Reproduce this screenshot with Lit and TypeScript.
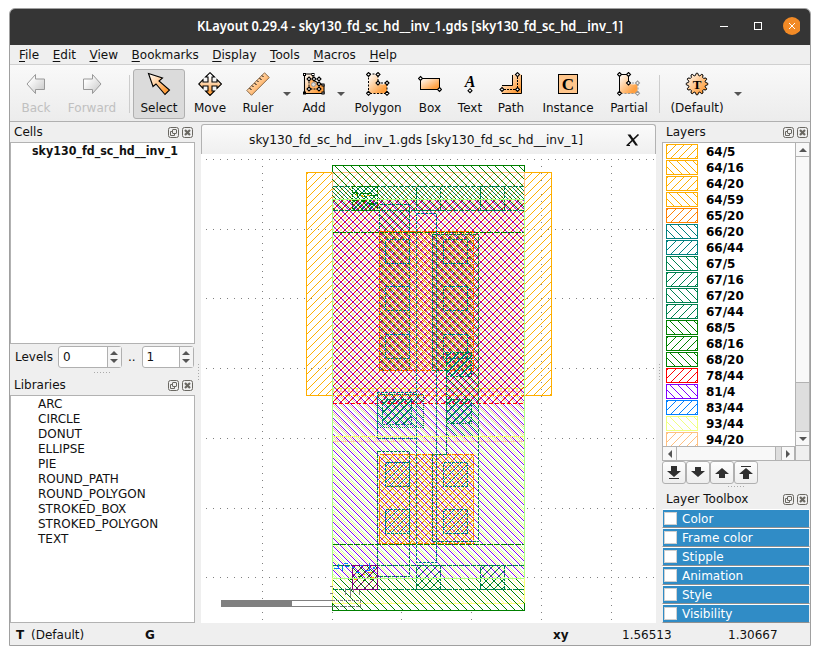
import { LitElement, html, svg, css, nothing } from "lit";
import { customElement, property } from "lit/decorators.js";

const diamond = (x: number, y: number, c = "#000") =>
  svg`<path d=${`M${x} ${y - 2}L${x + 2} ${y}L${x} ${y + 2}L${x - 2} ${y}Z`} fill="#fff" stroke=${c} stroke-width="1.1"></path>`;

const icons: Record<string, unknown> = {
  back: svg`<path d="M3 12L11.500 2.500V7H20.500V17.500H11.500V21.500Z" fill="url(#gray)" stroke="#999"/>`,
  forward: svg`<path d="M21 12L12.500 2.500V7H3.500V17.500H12.500V21.500Z" fill="url(#gray)" stroke="#999"/>`,
  select: svg`<path d="M1.500 1.500L15.500 6L12 9L22.500 18L18 22.500L9 12L6 14.500Z" fill="url(#or)" stroke="#000" stroke-width="1.100"/>`,
  move: svg`<path d="M12 .7L16.500 5H14V10H19V7.500L23.500 12L19 16.500V14H14V19H16.500L12 23.500L7.500 19H10V14H5V16.500L.7 12L5 7.500V10H10V5H7.500Z" fill="url(#ov)" stroke="#000" stroke-width="1.100"/>`,
  ruler: svg`<path d="M.8 18.500L18.500 .8L23.300 5.500L5.500 23.300Z" fill="url(#or)" stroke="#8a6a48" stroke-width="1"/><path d="M3.500 16l2 2M6 13.500l1.500 1.500M8.500 11l2 2M11 8.500l1.500 1.500M13.500 6l2 2M16 3.500l1.500 1.500" stroke="#000"/>`,
  add: svg`<path d="M2.500 2H11V8L18 12L22 13V21.500H2.500Z" fill="url(#or)" stroke="#000" stroke-width="1.100"/><path d="M7 6.500V17H17" fill="none" stroke="#000" stroke-dasharray="2 1"/><path d="M8 7.500V16H16V11.500H12V7.500Z" fill="#ffb060"/><circle cx="11.500" cy="12.500" r="2" fill="#ddd" stroke="#999"/>
    ${[[2.500, 2.500], [11, 2.500], [2.500, 21], [21, 13], [21, 21]].map(([x, y]) => svg`<rect x=${x - 1} y=${y - 1} width="2" height="2" fill="#fff" stroke="#000"/>`)}
    ${diamond(7, 7)}${diamond(12, 7)}${diamond(17, 7)}${diamond(7, 17)}${diamond(17, 17)}${diamond(17, 12)}`,
  polygon: svg`<path d="M2.500 2.500H12V11Q17 14 21 11V21.500H2.500Z" fill="url(#or)"/><path d="M2.500 2V21.500H21V11H12V2Z" fill="none" stroke="#000" stroke-dasharray="2 1.500"/>
    ${diamond(2.5, 2.5)}${diamond(12, 2.5)}${diamond(12, 11)}${diamond(21, 11)}${diamond(21, 21.3)}${diamond(2.5, 21.3)}`,
  box: svg`<rect x="2.500" y="6.500" width="19" height="11" fill="url(#or)" stroke="#000"/>${diamond(2.5, 6.5)}${diamond(21.5, 17.5)}`,
  text: svg`<text x="12" y="14.500" text-anchor="middle" font-family="Liberation Serif, serif" font-weight="700" font-style="italic" font-size="16">A</text>${diamond(12, 18.7)}`,
  path: svg`<path d="M13.500 2.500H22.500V21.500H2.500V13.500H13.500Z" fill="url(#or)"/><path d="M13.500 3V13.500H3M22.500 3V21.500H3" fill="none" stroke="#000"/><path d="M18.500 2V17.500H3" fill="none" stroke="#000" stroke-dasharray="2 1"/>${diamond(18.5, 2.6)}${diamond(18.5, 17.5)}${diamond(3, 17.5)}`,
  instance: svg`<rect x="2.500" y="2.500" width="19" height="19" fill="#ffc68c" stroke="#000"/><text x="12" y="17.500" text-anchor="middle" font-family="Liberation Serif, serif" font-weight="700" font-size="17">C</text>`,
  partial: svg`<path d="M2.500 2.500H11.500V11Q17 14 20.500 11V21.500H2.500Z" fill="url(#or)"/><path d="M2.500 21.500V2.500H11.500V11" fill="none" stroke="#000"/><path d="M11.500 11H21V21.500H2.500" fill="none" stroke="#999" stroke-dasharray="2 1.500"/>
    ${diamond(2.5, 2.5)}${diamond(11.5, 2.5)}${diamond(11.5, 11)}${diamond(20.5, 11, "#999")}${diamond(20.5, 21.3, "#999")}${diamond(2.5, 21.3)}`,
  gear: svg`<path d=${Array.from({ length: 48 }, (_, i) => {
    const r = i % 4 < 2 ? 10.8 : 8.6;
    const a = ((i - 0.5) * Math.PI) / 24;
    return `${i ? "L" : "M"}${(12 + r * Math.sin(a)).toFixed(2)} ${(12 - r * Math.cos(a)).toFixed(2)}`;
  }).join("") + "Z"} fill="url(#or)" stroke="#000"/><text x="12" y="16.500" text-anchor="middle" font-family="Liberation Serif, serif" font-weight="700" font-size="13">T</text>`,
};

@customElement("tool-button")
class ToolButton extends LitElement {
  @property() icon = "";
  @property() label = "";
  static styles = css`
    :host { display: flex; flex-direction: column; align-items: center; box-sizing: border-box; height: 50px; padding-top: 3px; flex: none; }
    :host([active]) { background: #dbdbdb; border: 1px solid #b0b0b0; border-radius: 3px; padding-top: 2px; }
    :host([disabled]) { color: #c0c0c0; }
    svg { width: 24px; height: 24px; flex: none; }
    span { line-height: 14px; margin-top: 5px; white-space: nowrap; }
  `;
  render() {
    return html`<svg viewBox="0 0 24 24">
        <defs>
          <linearGradient id="or" x2="1" y2="1"><stop offset=".1" stop-color="#fff4e8"/><stop offset=".8" stop-color="#ffa040"/></linearGradient>
          <linearGradient id="ov" x2="0" y2="1"><stop offset=".2" stop-color="#fff"/><stop offset=".8" stop-color="#ffa040"/></linearGradient>
          <linearGradient id="gray" x2="1" y2="1"><stop offset=".2" stop-color="#fff"/><stop offset="1" stop-color="#c4c4c4"/></linearGradient>
        </defs>${icons[this.icon]}</svg><span>${this.label}</span>`;
  }
}

@customElement("dock-title")
class DockTitle extends LitElement {
  @property() label = "";
  static styles = css`
    :host { display: flex; align-items: center; height: 20px; padding: 0 2px 0 4px; box-sizing: border-box; gap: 3px; }
    span { flex: 1; }
    svg { width: 11px; height: 11px; }
  `;
  render() {
    return html`<span>${this.label}</span>
      <svg viewBox="0 0 11 11" fill="none" stroke="#6a6862"><rect x=".5" y=".5" width="10" height="10" rx="2"/><rect x="4.500" y="2.500" width="4" height="4" rx=".5"/><path d="M4 4.500H2.500V8.500H6.500V7"/></svg>
      <svg viewBox="0 0 11 11" fill="none" stroke="#6a6862"><rect x=".5" y=".5" width="10" height="10" rx="2"/><path d="M3 3l5 5M8 3l-5 5" stroke-width="2.200"/></svg>`;
  }
}

const up = html`<svg class="tri" viewBox="0 0 8 4"><path d="M0 4L4 0L8 4Z" fill="#555"/></svg>`;
const down = html`<svg class="tri" viewBox="0 0 8 4"><path d="M0 0L4 4L8 0Z" fill="#555"/></svg>`;

/** 8x8 one-pixel diagonal stipple; dir 1 leans "/", -1 leans "\". */
const stipple = (id: string, color: string, dir: number, phase: number) =>
  svg`<pattern id="${id}" width="8" height="8" patternUnits="userSpaceOnUse"><path fill="${color}" d="${Array.from(
    { length: 8 },
    (_, i) => `M${(((dir > 0 ? 7 - i : i) + phase) % 8 + 8) % 8} ${i}h1v1h-1z`
  ).join("")}"></path></pattern>`;

const layers: [string, string][] = [
  ["64/5", "#ffae00"], ["64/16", "#ffae00"], ["64/20", "#ffae00"], ["64/59", "#ffae00"], ["65/20", "#ff8000"],
  ["66/20", "#008080"], ["66/44", "#008080"], ["67/5", "#008050"], ["67/16", "#008050"], ["67/20", "#008050"],
  ["67/44", "#008050"], ["68/5", "#008000"], ["68/16", "#008000"], ["68/20", "#008000"], ["78/44", "#ff0000"],
  ["81/4", "#8000ff"], ["83/44", "#0080ff"], ["93/44", "#f0ff80"], ["94/20", "#ffc080"],
];

@customElement("layout-canvas")
class LayoutCanvas extends LitElement {
  static styles = css`
    :host { display: block; background: #fff; overflow: hidden; }
    svg { display: block; width: 455px; height: 469px; }
  `;
  private shape(x1: number, y1: number, x2: number, y2: number, stroke: string, fills: string[], dash = "") {
    return svg`${fills.map((f) => svg`<rect x="${x1}" y="${y1}" width="${x2 - x1}" height="${y2 - y1}" fill="${`url(#${f})`}"></rect>`)}
      ${stroke ? svg`<rect x="${x1 + 0.5}" y="${y1 + 0.5}" width="${x2 - x1}" height="${y2 - y1}" fill="none" stroke="${stroke}" stroke-dasharray="${dash || nothing}"></rect>` : nothing}`;
  }
  private dots() {
    let d = "";
    const px = (x: number, y: number) => { d += `M${Math.floor(x)} ${Math.floor(y)}h1v1h-1z`; };
    for (let i = -18; i <= 46; i++)
      for (let j = 0; j <= 66; j++)
        if (i % 10 === 0 || j % 10 === 0) px(332 + i * 6.98, 159.4 + j * 6.975);
    return d;
  }
  render() {
    const s = this.shape.bind(this);
    const li = "#008050", poly = "#008080", dd = "3 1";
    return html`<svg viewBox="201 154 455 469" shape-rendering="crispEdges">
      <defs>
        ${stipple("well", "#ffae00", 1, 1)}${stipple("met", "#008000", -1, 1)}${stipple("peach", "#ffc080", 1, 3)}
        ${stipple("li", "#008050", -1, 5)}${stipple("con", "#008050", 1, 3)}${stipple("red", "#ff0000", 1, 7)}
        ${stipple("vio", "#8000ff", -1, 3)}${stipple("lime", "#c8ffa0", -1, 7)}${stipple("yel", "#ffff90", -1, 5)}
        ${stipple("sal", "#ffb8a0", -1, 1)}${stipple("or1", "#ff8000", 1, 1)}${stipple("or2", "#ff8000", -1, 0)}
        ${stipple("lic", "#008080", 1, 4)}${stipple("pur", "#800080", 1, 1)}
      </defs>
      <path fill="#808080" d="${this.dots()}"></path>
      ${s(306, 172, 551, 395, "#ffae00", ["well"])}
      <rect x="333" y="166" width="191" height="444" fill="#fff"/>
      ${s(332, 199, 524, 578, "", ["lime"])}
      ${s(332, 436, 524, 603, "#ffff80", ["yel"])}
      ${s(332, 172, 524, 391, "#ffc080", ["peach"])}
      ${s(332, 391, 524, 441, "#ffc8a8", ["sal"])}
      ${s(332, 388, 524, 436, "#f0ff60", [])}
      ${s(332, 165, 524, 199, "", ["met"])}
      ${s(332, 578, 524, 610, "", ["met"])}
      <path d="M332.500 172V165.500H524.500V172M332.500 603V610.500H524.500V603" fill="none" stroke="#008000"/>
      ${s(332, 199, 524, 578, "", ["vio"])}
      ${s(332, 199, 524, 403, "", ["red"])}
      <path d="M333 403.500H524" stroke="#f00" stroke-dasharray="4 2"/>
      <path d="M333 395.500H524" stroke="#ffae00" stroke-dasharray="2 2"/>
      <path d="M333 232.500H524M333 544.500H524" stroke="#008000" stroke-dasharray="6 1"/>
      ${s(332, 186, 524, 210, "", ["li"])}
      <path d="M333 186.500H524M333 210.500H524M333 565.500H524M333 589.500H524" stroke="#008050" stroke-dasharray="5 1"/>
      ${s(379, 204, 409, 370, li, ["li"], dd)}
      ${s(432, 234, 478, 370, "", ["li"])}
      ${s(379, 231, 473, 370, "#ff6000", ["or1", "or2"], "5 1")}
      ${s(379, 454, 473, 543, "#ff8000", ["or1", "or2"], "5 1")}
      ${s(446, 370, 478, 436, "", ["li"])}
      <path d="M432.500 234.500H478.500V541.500H432.500V454.500H446.500V370.500H432.500Z" fill="none" stroke="#008050" stroke-dasharray="3 1"/>
      ${s(377, 451, 409, 576, li, [], dd)}
      ${s(377, 394, 423, 427, li, ["li"], "1 1")}
      <path d="M416.500 438.500H377.500V392.500H416.500M416.500 213.500H436.500V562.500H416.500Z" fill="none" stroke="#008080" stroke-dasharray="3 1"/>
      ${[385, 443].flatMap((x) => [239, 286, 334].map((y) => s(x, y, x + 24, y + 24, poly, [], dd)))}
      ${[385, 443].flatMap((x) => [462, 509].map((y) => s(x, y, x + 24, y + 24, poly, ["lic"], dd)))}
      ${s(382, 399, 411, 424, poly, ["lic", "con", "li"], "2 1")}
      ${s(446, 352, 471, 376, li, ["con", "lic"], "2 1")}
      ${s(446, 399, 471, 423, li, ["con", "lic"], "2 1")}
      ${[416, 480].map((x) => s(x, 186, x + 24, 210, li, [], dd))}
      ${[416, 480].map((x) => s(x, 565, x + 24, 589, li, ["con"], dd))}
      ${s(352, 186, 377, 210, "#008000", ["con", "met"], dd)}
      <path d="M353 192h5v1h-5zM356 193h2v3h-2zM360 193h12v1h-12zM362 196h4v1h-4zM368 195h8v1h-8zM352 200h6v1h-6zM362 200h3v2h-3zM369 203h5v2h-5z" fill="#008000"/>
      <path d="M356 194h1v2h-1zM361 195h2v1h-2zM367 195h3v1h-3zM362 196h2v1h-2z" fill="#ffae00"/>
      ${s(352, 565, 377, 589, "#800080", ["met", "pur"])}
      <path d="M334 568h5v1h-5zM338 564h1v5h-1zM342 566h1v5h-1zM344 563h4v1h-4zM346 566h3v1h-3zM352 567h2v1h-2zM356 572h4v1h-4zM360 565h3v1h-3zM366 570h4v1h-4zM369 563h1v7h-1zM373 567h2v2h-2z" fill="#0080ff"/>
      <path d="M354 579h3v1h-3zM363 574h2v1h-2zM368 572h4v1h-4zM371 577h3v2h-3z" fill="#ffae00"/>
      <path d="M350 579h2v1h-2zM358 576h3v1h-3zM363 580h2v1h-2zM370 579h2v1h-2z" fill="#008000"/>
      <path d="M332.500 199V578M524.500 199V578M333 199.500H524M333 578.500H524" stroke="#aaff80"/>
      <path d="M333 436.500H524M332.500 579V603M524.500 579V603" stroke="#f4ff70"/>
      <path d="M221 600h71v7h-71zM292 600h40v1h-40zM292 606h40v1h-40zM330 586h3v1h-3zM330 593h3v1h-3zM345 588h1v7h-1zM350 587h1v10h-1zM353 589h1v4h-1zM359 591h1v4h-1z" fill="#808080"/>
      <path d="M332 600.500H360.500V606.500H332" fill="none" stroke="#808080" stroke-dasharray="3 1"/>
    </svg>`;
  }
}

@customElement("app-root")
class AppRoot extends LitElement {
  static styles = css`
    :host { display: block; box-sizing: border-box; width: 820px; height: 655px; padding: 8px 9px 9px; background: #fff; font: 12px/14px "DejaVu Sans", sans-serif; color: #111; }
    .window { box-sizing: border-box; width: 802px; height: 638px; border: 1px solid #a0a0a0; border-radius: 6px 6px 0 0; background: #efefef; display: flex; flex-direction: column; overflow: hidden; }
    .title { height: 36px; flex: none; background: #353535; color: #fff; display: flex; align-items: center; font: 600 14px/20px "Noto Sans", sans-serif; }
    .caption { width: 426px; margin-left: 187px; height: 20px; margin-top: -2px; }
    .controls { margin-left: 97px; height: 20px; width: 80px; margin-top: -2px; }
    .menu { height: 19px; flex: none; border-bottom: 1px solid #d0d0d0; display: flex; gap: 13.6px; padding-left: 9px; line-height: 20px; }
    .menu u { text-underline-offset: 2px; }
    .tools { height: 57px; flex: none; display: flex; padding: 4px 0 0 4px; box-sizing: border-box; background: linear-gradient(#f9f9f9, #ececec); border-bottom: 1px solid #b0b0b0; }
    .sep { height: 38px; margin-top: 6px; background: linear-gradient(#ccc, #ccc) center / 1px 100% no-repeat; flex: none; }
    .drop { display: flex; justify-content: center; padding-top: 23px; flex: none; }
    .tri { width: 8px; height: 4px; display: block; }
    .body { flex: 1; display: flex; min-height: 0; }
    .left { width: 185px; display: flex; flex-direction: column; }
    .left dock-title, .right dock-title { flex: none; }
    .list { background: #fff; border: 1px solid #b2b2b2; box-sizing: border-box; }
    .cells { height: 202px; flex: none; padding-left: 21px; }
    .fit { display: block; overflow: visible; }
    .levels { height: 31px; flex: none; display: flex; padding: 2px 0 0 5px; line-height: 22px; box-sizing: border-box; }
    .spin { height: 22px; box-sizing: border-box; border: 1px solid #b0b0b0; border-radius: 3px; background: #fff; display: flex; justify-content: space-between; padding-left: 4px; line-height: 21px; }
    .arrows { width: 13px; background: #f4f4f4; border-left: 1px solid #b0b0b0; display: flex; flex-direction: column; align-items: center; justify-content: center; gap: 4px; }
    .a { width: 64px; margin-left: 5px; }
    .b { width: 52px; margin-left: 6px; }
    .range { margin-left: 6px; }
    .grip { height: 1px; width: 17px; align-self: center; flex: none; background: repeating-linear-gradient(90deg, #aaa 0 1px, transparent 1px 3px); margin-bottom: 2px; }
    .left .grip { margin-top: -3px; }
    .libs { flex: 1; padding: 1px 0 0 27px; line-height: 15px; min-height: 0; }
    .center { margin-left: 6px; width: 455px; display: flex; flex-direction: column; }
    .tab { height: 30px; flex: none; margin-top: 2px; box-sizing: border-box; border: 1px solid #b2b2b2; border-bottom: 0; border-radius: 3px 3px 0 0; background: linear-gradient(#fbfbfb, #efefef); display: flex; align-items: center; padding-left: 47px; }
    .x { width: 14px; height: 12px; margin-left: 43px; }
    .vgrip { align-self: center; width: 1px; height: 17px; background: repeating-linear-gradient(#aaa 0 1px, transparent 1px 3px); }
    .vl { margin-left: 3px; margin-right: -4px; }
    .right { width: 148px; margin-left: 6px; display: flex; flex-direction: column; }
    .layers { height: 319px; flex: none; display: grid; grid-template: 303px 14px / 132px 14px; }
    .rows { overflow: hidden; padding: 1px 0 0 3px; }
    .row { display: flex; height: 16px; font-weight: 700; line-height: 16px; gap: 8px; color: #000; }
    .row svg { flex: none; }
    .vbar { display: grid; grid-template-rows: 14px 226px 49px 14px; border-left: 1px solid #b2b2b2; width: 13px; }
    .hbar { display: grid; grid-template-columns: 14px 99px 6px 13px; border-top: 1px solid #b2b2b2; height: 13px; }
    .cell { display: flex; align-items: center; justify-content: center; background: #f8f8f8; border: 0 solid #b2b2b2; box-sizing: border-box; }
    .vbar .cell { border-bottom-width: 1px; }
    .hbar .cell { border-right-width: 1px; }
    .cell.trough { background: #dedede; }
    .corner { border: solid #b2b2b2; border-width: 0 0 0 1px; background: #efefef; }
    .lt { transform: rotate(-90deg); } .rt { transform: rotate(90deg); }
    .movers { display: flex; height: 25px; flex: none; }
    .mover { width: 24px; height: 23px; box-sizing: border-box; border: 1px solid #b0b0b0; border-radius: 3px; background: linear-gradient(#fdfdfd, #eee); display: flex; align-items: center; justify-content: center; }
    .mover svg { width: 16px; height: 15px; flex: none; }
    .opts { height: 114px; flex: none; }
    .opt { height: 19px; box-sizing: border-box; border-top: 1px solid #fff; border-bottom: 1px solid #909090; border-left: 1px solid #efefef; border-right: 1px solid #efefef; background: #308cc6; color: #fff; display: flex; align-items: center; padding-left: 1px; gap: 5px; }
    .check { width: 13px; height: 13px; background: #fff; outline: 1px solid #d0d0d0; outline-offset: -1px; }
    .status { height: 22px; flex: none; display: grid; grid-template-columns: 15px 114px 408px 69px 106px 1fr 12px; padding-left: 6px; line-height: 24px; }
    .size { width: 11px; height: 11px; align-self: end; display: block; margin-bottom: 1px; }
  `;

  private fit(text: string, width: number, bold = false, size = 12, h = 15, base = 12) {
    return html`<svg class="fit" width="${width}" height="${h}"><text x="0" y="${base}" textLength="${width}" lengthAdjust="spacingAndGlyphs" fill="currentColor" font-size="${size}" font-weight="${bold ? 700 : "inherit"}">${text}</text></svg>`;
  }

  private tool(icon: string, label: string, width: number, flag = "") {
    return html`<tool-button icon=${icon} label=${label} style="width:${width}px" ?active=${flag === "active"} ?disabled=${flag === "disabled"}></tool-button>`;
  }
  private gap(kind: string, width: number) {
    return html`<div class=${kind} style="width:${width}px">${kind === "drop" ? down : nothing}</div>`;
  }

  render() {
    const menus = ["File", "Edit", "View", "Bookmarks", "Display", "Tools", "Macros", "Help"];
    const libs = ["ARC", "CIRCLE", "DONUT", "ELLIPSE", "PIE", "ROUND_PATH", "ROUND_POLYGON", "STROKED_BOX", "STROKED_POLYGON", "TEXT"];
    const movers = ["M5 1h6v5h4L8 12L1 6h4zM3 13h10v1H3z", "M5 2h6v4h4L8 12L1 6h4z", "M5 13h6V9h4L8 3L1 9h4z", "M5 14h6V9h4L8 3L1 9h4zM3 1h10v1H3z"];
    return html`<div class="window">
      <div class="title">
        <div class="caption">${this.fit("KLayout 0.29.4 - sky130_fd_sc_hd__inv_1.gds [sky130_fd_sc_hd__inv_1]", 426, false, 14, 20, 15)}</div>
        <svg class="controls" viewBox="0 0 80 20" fill="none" stroke="#fff"><path d="M0 10.500h8"/><rect x="34.500" y="6.500" width="7" height="7"/><circle cx="72" cy="10" r="9" fill="#f28a26" stroke="none"/><path d="M69 7l6 6M75 7l-6 6"/></svg>
      </div>
      <div class="menu">${menus.map((m) => html`<span><u>${m[0]}</u>${m.slice(1)}</span>`)}</div>
      <div class="tools">
        ${this.tool("back", "Back", 44, "disabled")}${this.tool("forward", "Forward", 68, "disabled")}${this.gap("sep", 7)}
        ${this.tool("select", "Select", 52, "active")}${this.tool("move", "Move", 50)}${this.tool("ruler", "Ruler", 46)}${this.gap("drop", 12)}
        ${this.tool("add", "Add", 42)}${this.gap("drop", 11)}${this.tool("polygon", "Polygon", 64)}${this.tool("box", "Box", 40)}
        ${this.tool("text", "Text", 40)}${this.tool("path", "Path", 42)}${this.tool("instance", "Instance", 72)}${this.tool("partial", "Partial", 50)}
        ${this.gap("sep", 11)}${this.tool("gear", "(Default)", 64)}${this.gap("drop", 18)}
      </div>
      <div class="body">
        <div class="left">
          <dock-title label="Cells"></dock-title>
          <div class="list cells">${this.fit("sky130_fd_sc_hd__inv_1", 146, true)}</div>
          <div class="levels"><span>Levels</span>
            <div class="spin a"><span>0</span><div class="arrows">${up}${down}</div></div><span class="range">..</span>
            <div class="spin b"><span>1</span><div class="arrows">${up}${down}</div></div></div>
          <div class="grip"></div>
          <dock-title label="Libraries"></dock-title>
          <div class="list libs">${libs.map((l) => html`<div>${l}</div>`)}</div>
        </div>
        <div class="vgrip vl"></div>
        <div class="center">
          <div class="tab">${this.fit("sky130_fd_sc_hd__inv_1.gds [sky130_fd_sc_hd__inv_1]", 334)}
            <svg class="x" viewBox="0 0 14 12"><path d="M1.500 .5H4.500L12 11.500H9.500Z" fill="#111"/><path d="M12.500 .5L1 11.500" stroke="#111" stroke-width="1.600"/><path d="M.5 11.500H4" stroke="#111"/></svg></div>
          <layout-canvas></layout-canvas>
        </div>
        <div class="vgrip vl"></div>
        <div class="right">
          <dock-title label="Layers"></dock-title>
          <div class="list layers">
            <div class="rows">
              ${layers.map(([n, c], i) => html`<div class="row"><svg width="32" height="15" shape-rendering="crispEdges"><defs>${stipple(`s${i}`, c, i % 2 ? -1 : 1, i === 1 || i === 3 ? 2 : 3)}</defs><rect x=".5" y=".5" width="31" height="14" fill="${`url(#s${i})`}" stroke="${c}"></rect></svg><span>${n}</span></div>`)}
            </div>
            <div class="vbar"><div class="cell">${up}</div><div class="cell"></div><div class="cell trough"></div><div class="cell">${down}</div></div>
            <div class="hbar"><div class="cell"><span class="lt">${up}</span></div><div class="cell"></div><div class="cell trough"></div><div class="cell"><span class="rt">${up}</span></div></div>
            <div class="corner"></div>
          </div>
          <div class="movers">${movers.map((d) => html`<div class="mover"><svg viewBox="0 0 16 15"><path d="${d}" fill="#303030"></path></svg></div>`)}</div>
          <div class="grip"></div>
          <dock-title label="Layer Toolbox"></dock-title>
          <div class="opts">${["Color", "Frame color", "Stipple", "Animation", "Style", "Visibility"].map((o) => html`<div class="opt"><div class="check"></div>${o}</div>`)}</div>
        </div>
      </div>
      <div class="status"><b>T</b><span>(Default)</span><b>G</b><b>xy</b><span>1.56513</span><span>1.30667</span><span></span>
        <svg class="size" viewBox="0 0 11 11" shape-rendering="crispEdges"><path fill="#aaa" d="M9 0h1v1h-1zM6 3h1v1h-1zM9 3h1v1h-1zM3 6h1v1h-1zM6 6h1v1h-1zM9 6h1v1h-1zM0 9h1v1h-1zM3 9h1v1h-1zM6 9h1v1h-1zM9 9h1v1h-1z"/></svg></div>
    </div>`;
  }
}
